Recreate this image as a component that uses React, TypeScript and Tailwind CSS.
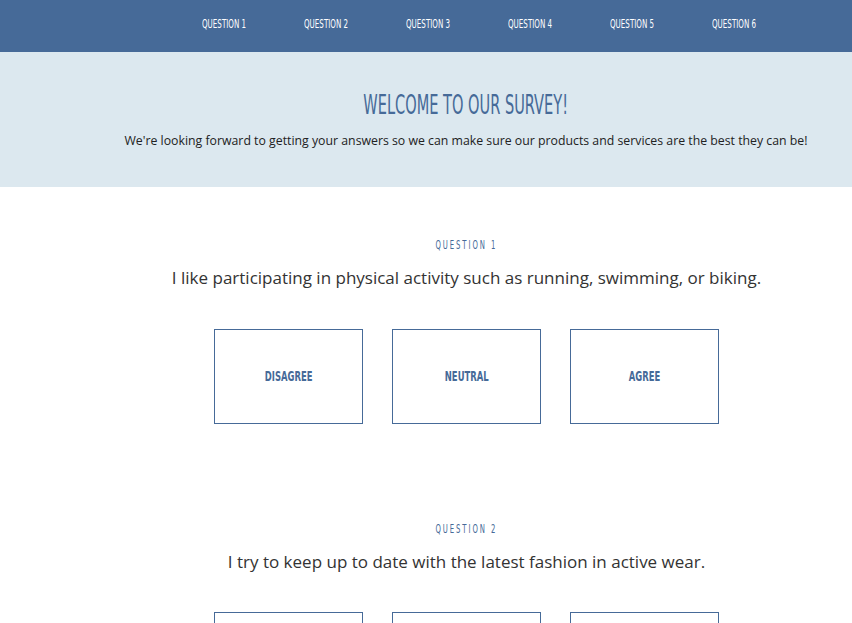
const NAV = ["Question 1", "Question 2", "Question 3", "Question 4", "Question 5", "Question 6"];

const QUESTIONS = [
  "I like participating in physical activity such as running, swimming, or biking.",
  "I try to keep up to date with the latest fashion in active wear.",
];

const ANSWERS = ["Disagree", "Neutral", "Agree"];

const narrow = "font-['DejaVu_Sans_Condensed','Liberation_Sans_Narrow',sans-serif]";

const App = () => {
  return (
    <div className="min-h-[623px] bg-white font-['Open_Sans',sans-serif]">
      {/* Nav */}
      <nav className="h-[52px] bg-[#466a98] flex items-center pl-[202px] pb-[8px]">
        {NAV.map((n) => (
          <div key={n} className="w-[102px]">
            <span className={`${narrow} inline-block origin-left scale-x-[0.61] text-[13px] uppercase text-white whitespace-nowrap`}>
              {n}
            </span>
          </div>
        ))}
      </nav>

      {/* Hero */}
      <section className="h-[135px] bg-[#dce8ef] pl-[80px] flex flex-col items-center pt-[38px]">
        <h1 className={`${narrow} inline-block scale-x-[0.6] text-[27px] leading-[30px] uppercase text-[#466a98] whitespace-nowrap`}>
          Welcome to our survey!
        </h1>
        <p className="mt-[12px] text-[12.3px] text-[#222]">
          We're looking forward to getting your answers so we can make sure our products and services are the best they can be!
        </p>
      </section>

      {/* Questions */}
      <main className="pl-[81px]">
        {QUESTIONS.map((q, i) => (
          <div key={i} className="flex flex-col items-center pt-[49px] pb-[47px]">
            <div className={`${narrow} inline-block scale-x-[0.64] text-[12px] uppercase tracking-[3px] text-[#466a98] whitespace-nowrap`}>
              Question {i + 1}
            </div>
            <p className="mt-[11px] text-[17px] text-[#333]">{q}</p>
            <div className="mt-[38px] flex gap-[29px]">
              {ANSWERS.map((a) => (
                <button
                  key={a}
                  className="w-[149px] h-[95px] border border-[#466a98] flex items-center justify-center"
                >
                  <span className={`${narrow} inline-block scale-x-[0.67] font-bold text-[14px] uppercase text-[#466a98]`}>
                    {a}
                  </span>
                </button>
              ))}
            </div>
          </div>
        ))}
      </main>
    </div>
  );
};

export default App;
